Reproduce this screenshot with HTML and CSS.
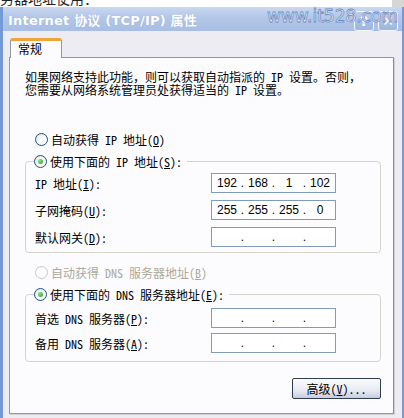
FILE: index.html
```html
<!DOCTYPE html>
<html lang="zh-CN">
<head>
  <meta charset="UTF-8">
  <title>Internet 协议 (TCP/IP) 属性</title>
  <link rel="stylesheet" href="styles.css">
</head>
<body>

  <!-- text of the page behind the dialog -->
  <div class="behind"><span>务器地址使用：</span></div>

  <div class="window">
    <div class="titlebar">
      <span class="title">Internet 协议 (TCP/IP) 属性</span>
      <div class="title-buttons">
        <span class="tbtn">?</span>
        <span class="tbtn">✕</span>
      </div>
      <span class="watermark">www.it528.com</span>
    </div>

    <div class="client">
      <div class="tabs">
        <span class="tab">常规</span>
      </div>

      <div class="panel">
        <p class="desc">如果网络支持此功能，则可以获取自动指派的 IP 设置。否则，<br>您需要从网络系统管理员处获得适当的 IP 设置。</p>

        <div class="option">
          <span class="radio"></span>
          <span>自动获得 IP 地址(<u>O</u>)</span>
        </div>

        <fieldset class="group">
          <legend>
            <span class="radio checked"></span>
            <span>使用下面的 IP 地址(<u>S</u>):</span>
          </legend>
          <div class="rows">
            <div class="row">
              <span>IP 地址(<u>I</u>):</span>
              <div class="ipbox"><span>192</span><i>.</i><span>168</span><i>.</i><span>1</span><i>.</i><span>102</span></div>
            </div>
            <div class="row">
              <span>子网掩码(<u>U</u>):</span>
              <div class="ipbox"><span>255</span><i>.</i><span>255</span><i>.</i><span>255</span><i>.</i><span>0</span></div>
            </div>
            <div class="row">
              <span>默认网关(<u>D</u>):</span>
              <div class="ipbox"><span></span><i>.</i><span></span><i>.</i><span></span><i>.</i><span></span></div>
            </div>
          </div>
        </fieldset>

        <div class="option disabled">
          <span class="radio"></span>
          <span>自动获得 DNS 服务器地址(<u>B</u>)</span>
        </div>

        <fieldset class="group dns">
          <legend>
            <span class="radio checked"></span>
            <span>使用下面的 DNS 服务器地址(<u>E</u>):</span>
          </legend>
          <div class="rows">
            <div class="row">
              <span>首选 DNS 服务器(<u>P</u>):</span>
              <div class="ipbox"><span></span><i>.</i><span></span><i>.</i><span></span><i>.</i><span></span></div>
            </div>
            <div class="row">
              <span>备用 DNS 服务器(<u>A</u>):</span>
              <div class="ipbox"><span></span><i>.</i><span></span><i>.</i><span></span><i>.</i><span></span></div>
            </div>
          </div>
        </fieldset>

        <div class="actions">
          <button class="btn">高级(<u>V</u>)...</button>
        </div>
      </div>
    </div>
  </div>

</body>
</html>
```

FILE: styles.css
```css
body {
  margin: 0;
  background-color: #ffffff;
  font-family: "Noto Sans Mono CJK SC", "Noto Sans CJK SC", "Liberation Mono", monospace;
  font-size: 12px;
  color: #000;
  overflow: hidden;
}
.behind {
  height: 7px;
  overflow: hidden;
  background: linear-gradient(to right, #fff 97%, #d6d6d6 97%);
}
.behind span {
  display: block;
  margin-top: -10px;
  font-size: 14px;
  line-height: 16px;
  color: #222;
}
.window {
  background-color: #edecf2;
  border-left: 3px solid #7598d6;
  border-right: 2px solid #7598d6;
  height: 411px;
}
.titlebar {
  position: relative;
  height: 24px;
  display: flex;
  align-items: center;
  justify-content: space-between;
  padding: 0 4px 0 5px;
  background: linear-gradient(#cbd8ef, #b2c6e8 45%, #a9bee4);
}
.title {
  font-family: "DejaVu Sans", "Noto Sans CJK SC", sans-serif;
  font-weight: bold;
  font-size: 13px;
  letter-spacing: 0.2px;
  color: #fff;
  text-shadow: 0 0 1px #8fa6cf;
}
.title-buttons {
  display: flex;
  gap: 4px;
  margin-top: 4px;
}
.tbtn {
  width: 18px;
  height: 18px;
  border: 1px solid #f4f7fc;
  border-radius: 3px;
  background: linear-gradient(#b9cbea, #9db5df);
  color: #fff;
  font-family: "DejaVu Sans", sans-serif;
  font-weight: bold;
  font-size: 14px;
  line-height: 18px;
  text-align: center;
}
.watermark {
  position: absolute;
  right: 4px;
  top: -1px;
  font-family: "DejaVu Sans", sans-serif;
  font-size: 17px;
  color: #fff;
  -webkit-text-stroke: 0.8px #6d8cc4;
}
.client {
  padding: 7px 8px 0 6px;
}
.tabs {
  display: flex;
  padding-left: 1px;
}
.tab {
  position: relative;
  z-index: 1;
  margin-bottom: -1px;
  padding-left: 7px;
  box-sizing: border-box;
  width: 52px;
  height: 20px;
  border: 1px solid #919b9c;
  border-top: 3px solid #f1a33b;
  border-bottom: none;
  border-radius: 3px 3px 0 0;
  background-color: #fcfcfe;
  line-height: 16px;
}
.panel {
  height: 355px;
  border: 1px solid #919b9c;
  border-right-color: #8c9090;
  background-color: #fcfcfe;
  padding: 0 12px 0 15px;
  box-shadow: 1px 1px 0 #d0cfd8;
}
.desc {
  margin: 12px 0 0;
  line-height: 13px;
}
.option {
  display: flex;
  align-items: center;
  gap: 3px;
  height: 20px;
  margin: 33px 0 0 10px;
}
.option.disabled {
  color: #aca899;
  margin-top: 9px;
}
.radio {
  width: 11px;
  height: 11px;
  border: 1px solid #1c5180;
  border-radius: 50%;
  background: radial-gradient(circle at 65% 65%, #fff 30%, #dcdcd6);
  display: inline-flex;
  align-items: center;
  justify-content: center;
}
.option.disabled .radio {
  border-color: #cac8bb;
  background: #fcfcfe;
}
.radio.checked::after {
  content: "";
  width: 5px;
  height: 5px;
  border-radius: 50%;
  background: radial-gradient(circle at 35% 35%, #8be08b, #21a121);
}
.group {
  margin: 2px 0 0 0;
  padding: 0 0 5px 9px;
  border: 1px solid #d5d3cc;
  border-radius: 4px;
  min-width: 0;
}
.group legend {
  display: flex;
  align-items: center;
  gap: 3px;
  height: 20px;
  padding: 0 5px 0 0;
  margin-left: -1px;
}
.rows {
  display: flex;
  flex-direction: column;
  gap: 7px;
  margin-top: 2px;
}
.dns .rows {
  gap: 5px;
  margin-top: 4px;
}
.dns {
  padding-bottom: 8px;
}
.row {
  display: grid;
  grid-template-columns: 176px 125px;
  align-items: center;
  height: 20px;
}
.ipbox {
  height: 20px;
  box-sizing: border-box;
  border: 1px solid #7f9db9;
  background: #fff;
  display: flex;
  align-items: center;
  justify-content: center;
  font-family: "Liberation Sans", sans-serif;
  font-size: 12px;
}
.ipbox span {
  width: 24px;
  text-align: center;
}
.ipbox i {
  font-style: normal;
  width: 7px;
  text-align: center;
}
.actions {
  display: flex;
  justify-content: flex-end;
  margin-top: 16px;
}
.btn {
  width: 89px;
  height: 21px;
  border: 1px solid #2f3d55;
  border-radius: 2px;
  background: linear-gradient(#fbfbfd, #e9ebf3 60%, #c6cde0);
  font-family: "Noto Sans Mono CJK SC", "Noto Sans CJK SC", sans-serif;
  font-size: 12px;
  padding: 0;
}
```
